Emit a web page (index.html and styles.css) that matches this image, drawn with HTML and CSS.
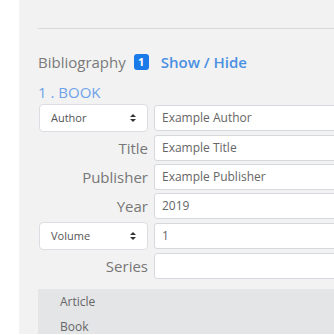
FILE: index.html
```html
<!DOCTYPE html>
<html lang="en">
<head>
  <meta charset="UTF-8" />
  <meta name="viewport" content="width=device-width, initial-scale=1.0"/>
  <title>Bibliography</title>
  <link rel="stylesheet" href="styles.css">
</head>
<body>

<div class="panel">
  <div class="divider"></div>

  <!-- Heading -->
  <div class="bib-head">
    <span class="bib-title">Bibliography</span>
    <span class="badge">1</span>
    <a href="#" class="toggle">Show / Hide</a>
  </div>

  <div class="entry-type">1 . BOOK</div>

  <!-- Entry form -->
  <div class="entry-grid">
    <div class="fake-select">Author <span class="arrows"></span></div>
    <div class="field">Example Author</div>

    <label class="field-label">Title</label>
    <div class="field">Example Title</div>

    <label class="field-label">Publisher</label>
    <div class="field">Example Publisher</div>

    <label class="field-label">Year</label>
    <div class="field">2019</div>

    <div class="fake-select">Volume <span class="arrows"></span></div>
    <div class="field">1</div>

    <label class="field-label">Series</label>
    <div class="field"></div>
  </div>

  <!-- Type menu -->
  <ul class="type-menu">
    <li>Article</li>
    <li>Book</li>
  </ul>
</div>

</body>
</html>
```

FILE: styles.css
```css
body, html {
  font-family: 'Open Sans', sans-serif;
  margin: 0;
  background: #ffffff;
  color: #777;
  overflow: hidden;
}

.panel {
  margin-left: 19px;
  height: 334px;
  background: #f2f2f2;
  padding-left: 19px;
  overflow: hidden;
}

.divider {
  height: 28px;
  border-bottom: 1px solid #d9d9d9;
}

.bib-head {
  display: flex;
  align-items: center;
  margin-top: 23px;
  height: 20px;
  font-size: 15px;
}

.bib-title {
  color: #7a7a7a;
}

.badge {
  margin-left: 8px;
  width: 15px;
  height: 16px;
  border-radius: 3px;
  background: #1a7be8;
  color: #fff;
  font-size: 11px;
  font-weight: bold;
  line-height: 16px;
  text-align: center;
}

.toggle {
  margin-left: 12px;
  color: #4a90e2;
  font-weight: 600;
  text-decoration: none;
}

.entry-type {
  margin-top: 10px;
  font-size: 15px;
  line-height: 20px;
  color: #6ea2ea;
}

.entry-grid {
  margin-top: 2px;
  margin-right: -20px;
  display: grid;
  grid-template-columns: 109px 1fr;
  column-gap: 6px;
  row-gap: 3px;
  align-items: center;
  padding-left: 1px;
}

.fake-select {
  height: 28px;
  box-sizing: border-box;
  border: 1px solid #dadde1;
  border-radius: 4px;
  background: #fff;
  padding-left: 11px;
  font-size: 11px;
  line-height: 26px;
  color: #555;
  position: relative;
}

.arrows {
  position: absolute;
  right: 11px;
  top: 9px;
  width: 0;
  height: 0;
  border-left: 3px solid transparent;
  border-right: 3px solid transparent;
  border-bottom: 3px solid #333;
}

.arrows::after {
  content: "";
  position: absolute;
  left: -3px;
  top: 5px;
  border-left: 3px solid transparent;
  border-right: 3px solid transparent;
  border-top: 3px solid #333;
}

.field {
  height: 26px;
  box-sizing: border-box;
  border: 1px solid #d5d9de;
  border-radius: 3px;
  background: #fff;
  padding-left: 7px;
  font-size: 12px;
  line-height: 24px;
  color: #666;
}

.field-label {
  text-align: right;
  font-size: 15px;
  line-height: 26px;
  color: #777;
}

.type-menu {
  list-style: none;
  margin: 10px 0 0;
  padding: 0 0 0 22px;
  background: #e4e5e6;
  font-size: 12px;
  color: #666;
}

.type-menu li {
  height: 25px;
  line-height: 25px;
}
```
